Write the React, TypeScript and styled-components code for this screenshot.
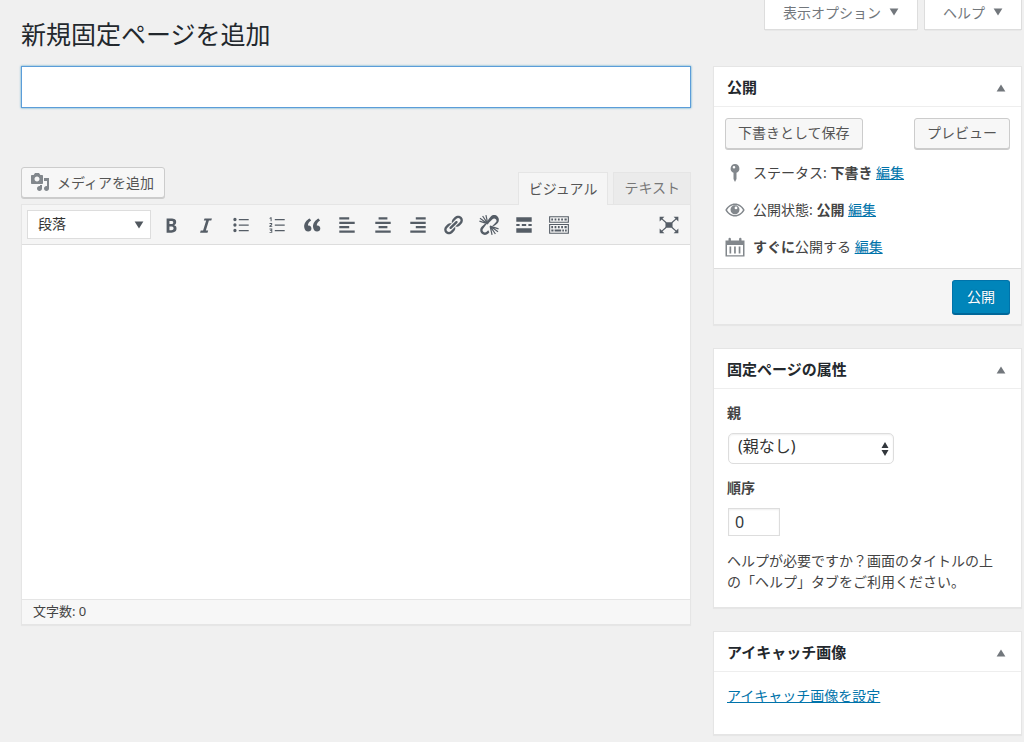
import React from 'react';
import styled, { createGlobalStyle } from 'styled-components';

const Global = createGlobalStyle`
  *, *::before, *::after { box-sizing: border-box; }
  body {
    margin: 0;
    background: #f0f0f0;
    color: #444;
    font: 14px/20px "Noto Sans", "Noto Sans CJK JP", sans-serif;
  }
  button, input, select, textarea { font-family: inherit; color: inherit; margin: 0; }
`;

const Page = styled.div`
  padding: 0 2px 6px 21px;
`;

const Header = styled.header`
  display: flex;
  justify-content: space-between;
  align-items: flex-start;
  height: 66px;
`;

const PageTitle = styled.h1`
  margin: 0;
  padding-top: 17px;
  font-size: 25px;
  line-height: 34px;
  font-weight: 400;
  color: #23282d;
`;

const MetaTabs = styled.nav`
  display: flex;
  gap: 6px;
`;

const MetaTab = styled.button`
  display: flex;
  align-items: center;
  gap: 8px;
  height: 30px;
  padding: 0 18px 5px;
  border: 1px solid #ddd;
  border-top: 0;
  background: #fff;
  box-shadow: 0 1px 1px -1px rgba(0, 0, 0, 0.2);
  color: #72777c;
  font-size: 14px;
`;

const Columns = styled.div`
  display: grid;
  grid-template-columns: minmax(0, 1fr) 309px;
  gap: 22px;
  align-items: start;
`;

const TitleInput = styled.input`
  display: block;
  width: 100%;
  height: 42px;
  padding: 4px 10px;
  border: 1px solid #5b9dd9;
  background: #fff;
  box-shadow: 0 0 2px rgba(30, 140, 190, 0.8);
  font-size: 20px;
  outline: 0;
`;

const EditorBar = styled.div`
  display: flex;
  justify-content: space-between;
  align-items: flex-end;
  margin-top: 59px;
`;

const Button = styled.button<{ $primary?: boolean }>`
  display: inline-flex;
  align-items: center;
  justify-content: center;
  gap: 6px;
  height: ${p => (p.$primary ? 34 : 31)}px;
  padding: 0 ${p => (p.$primary ? 14 : 12)}px 3px;
  border: 1px solid ${p => (p.$primary ? '#0073aa' : '#ccc')};
  border-bottom-color: ${p => (p.$primary ? '#006799' : '#ccc')};
  border-radius: 3px;
  background: ${p => (p.$primary ? '#0085ba' : '#f7f7f7')};
  box-shadow: 0 1px 0 ${p => (p.$primary ? '#006799' : '#ccc')};
  color: ${p => (p.$primary ? '#fff' : '#555')};
  text-shadow: ${p => (p.$primary ? '0 -1px 1px #006799' : 'none')};
  font-size: 14px;
  white-space: nowrap;
`;

const MediaButton = styled(Button)`
  gap: 7px;
  margin-bottom: 6px;
  padding: 0 10px 2px 8px;
  svg { color: #82878c; }
`;

const Tabs = styled.div`
  display: flex;
  gap: 5px;
`;

const Tab = styled.button<{ $active?: boolean }>`
  position: relative;
  height: ${p => (p.$active ? 33 : 32)}px;
  margin-bottom: ${p => (p.$active ? -1 : 0)}px;
  padding: 0 10px 3px;
  border: 1px solid #e5e5e5;
  border-bottom: 0;
  background: ${p => (p.$active ? '#f5f5f5' : '#ebebeb')};
  color: ${p => (p.$active ? '#555' : '#777')};
  font-size: 14px;
`;

const Editor = styled.section`
  border: 1px solid #e5e5e5;
  background: #fff;
  box-shadow: 0 1px 1px rgba(0, 0, 0, 0.04);
`;

const Toolbar = styled.div`
  display: flex;
  align-items: center;
  height: 40px;
  padding: 0 5px;
  border-bottom: 1px solid #ddd;
  background: #f5f5f5;
`;

const FormatBox = styled.div`
  display: flex;
  align-items: center;
  width: 124px;
  height: 29px;
  margin-right: 2px;
  padding-right: 6px;
  border: 1px solid #ddd;
  background: #fff;
  color: #50575e;
`;

const PlainSelect = styled.select`
  flex: 1;
  min-width: 0;
  height: 100%;
  padding: 0 10px 2px;
  border: 0;
  appearance: none;
  background: transparent;
  color: #333;
  font-size: 14px;
`;

const ParentSelect = styled(PlainSelect)`
  padding: 0 9px 5px;
  font-size: 16px;
`;

const ToolGroup = styled.div`
  display: flex;
  flex: 0 1 424px;
`;

const Tool = styled.button`
  display: flex;
  flex: 1;
  align-items: center;
  justify-content: center;
  padding: 0;
  border: 0;
  background: none;
  color: #555d66;
`;

const CornerTool = styled(Tool)`
  flex: 0 0 32px;
  margin-left: auto;
`;

const Canvas = styled.textarea`
  display: block;
  width: 100%;
  height: 354px;
  padding: 10px;
  border: 0;
  outline: 0;
  resize: none;
  background: #fff;
  font-size: 16px;
`;

const StatusBar = styled.footer`
  height: 25px;
  padding: 0 11px;
  border-top: 1px solid #e5e5e5;
  background: #f7f7f7;
  font-size: 13px;
  line-height: 23px;
`;

const Sidebar = styled.aside`
  display: flex;
  flex-direction: column;
  gap: 23px;
`;

const Panel = styled.section`
  border: 1px solid #e5e5e5;
  background: #fff;
  box-shadow: 0 1px 1px rgba(0, 0, 0, 0.04);
`;

const PanelHead = styled.div`
  display: flex;
  align-items: center;
  justify-content: space-between;
  height: 40px;
  padding: 0 15px 0 13px;
  border-bottom: 1px solid #eee;
`;

const PanelTitle = styled.h2`
  margin: 0;
  font-size: 15px;
  line-height: 20px;
  font-weight: 700;
  color: #23282d;
`;

const Toggle = styled.button`
  display: flex;
  padding: 3px 0 0;
  border: 0;
  background: none;
  color: #72777c;
`;

const PanelBody = styled.div`
  padding: 14px 13px 15px;
`;

const PublishBody = styled.div`
  padding: 11px 11px 11px;
`;

const Actions = styled.div`
  display: flex;
  justify-content: space-between;
  margin-bottom: 14px;
`;

const StatusList = styled.ul`
  display: grid;
  gap: 17px;
  margin: 0;
  padding: 0;
  list-style: none;
`;

const StatusRow = styled.li`
  display: flex;
  align-items: center;
  gap: 8px;
  height: 20px;
  color: #444;
  svg { color: #82878c; }
`;

const Link = styled.a`
  color: #0073aa;
  text-decoration: underline;
`;

const PanelFoot = styled.div`
  display: flex;
  justify-content: flex-end;
  padding: 11px 11px 10px;
  border-top: 1px solid #ddd;
  background: #f5f5f5;
`;

const FieldLabel = styled.label`
  display: block;
  margin-bottom: 10px;
  font-weight: 700;
`;

const ParentBox = styled.div`
  display: flex;
  align-items: center;
  width: 166px;
  height: 31px;
  margin: 0 0 14px 1px;
  padding-right: 4px;
  border: 1px solid #ddd;
  border-radius: 5px;
  box-shadow: inset 0 1px 2px rgba(0, 0, 0, 0.07);
  color: #32373c;
`;

const OrderInput = styled.input`
  display: block;
  width: 52px;
  height: 28px;
  margin: 0 0 14px 1px;
  padding: 3px 6px;
  border: 1px solid #ddd;
  box-shadow: inset 0 1px 2px rgba(0, 0, 0, 0.07);
  color: #32373c;
  font-size: 16px;
`;

const Help = styled.p`
  margin: 0;
  padding-right: 8px;
  line-height: 21px;
`;

const FeaturedBody = styled(PanelBody)`
  padding-bottom: 28px;
`;

type IconProps = { d: string; size?: number; strokes?: string };
const Icon = ({ d, size = 22, strokes }: IconProps) => (
  <svg width={size} height={size} viewBox="0 0 20 20" fill="currentColor" fillRule="evenodd" aria-hidden="true">
    <path d={d} />
    {strokes && <path d={strokes} fill="none" stroke="currentColor" strokeWidth="1.1" />}
  </svg>
);

const Triangle = ({ up }: { up?: boolean }) => (
  <svg width="10" height="8" viewBox="0 0 10 8" fill="currentColor" aria-hidden="true">
    <path d={up ? 'M5 0.5L9.4 7.5H0.6z' : 'M0.6 0.5H9.4L5 7.5z'} />
  </svg>
);

const icons = {
  bold: 'M6 4v13h4.54c1.37 0 2.46-.33 3.26-1 .8-.66 1.2-1.58 1.2-2.77 0-.84-.17-1.51-.51-2.01s-.9-.85-1.67-1.03v-.09c.57-.1 1.02-.4 1.36-.9s.51-1.13.51-1.91c0-1.14-.39-1.98-1.17-2.5C12.75 4.26 11.5 4 9.78 4H6zm2.57 5.15V6.26h1.36c.73 0 1.27.11 1.61.32.34.22.51.58.51 1.07 0 .54-.16.92-.47 1.15s-.82.35-1.51.35h-1.45zm0 2.19h1.6c1.44 0 2.16.53 2.16 1.61 0 .6-.17 1.05-.51 1.34s-.86.43-1.57.43H8.57v-3.38z',
  italic: 'M14.78 6h-2.13l-2.8 9h2.12l-.62 2H4.6l.62-2h2.14l2.8-9H8.03l.62-2h6.75z',
  bullets: 'M4.5 3.5a1.5 1.5 0 1 1 0 3 1.5 1.5 0 0 1 0-3zm0 5a1.5 1.5 0 1 1 0 3 1.5 1.5 0 0 1 0-3zm0 5a1.5 1.5 0 1 1 0 3 1.5 1.5 0 0 1 0-3zM8 4.5h9v1.1H8zM8 9.5h9v1.1H8zM8 14.5h9v1.1H8z',
  numbers: 'M8 4.5h9v1.1H8zM8 9.5h9v1.1H8zM8 14.5h9v1.1H8zM4.2 3h.9v3.6h-.9V4.1l-.9.4v-.8zM3.2 8.2h2.4v1.9l-1.4 1h1.5v.8H3.1v-1.2l1.6-1.1V9H3.2zM3.2 13.2h2.5v3.9H3.2v-.8h1.6v-.8H3.6v-.8h1.2V14H3.2z',
  quote: 'M9.49 13.22c0-.74-.2-1.38-.61-1.9-.62-.78-1.83-.88-2.53-.72-.29-1.65 1.11-3.75 2.92-4.65L7.88 4c-2.73 1.3-5.42 4.28-4.96 8.05C3.21 14.43 4.59 16 6.54 16c.85 0 1.56-.25 2.12-.75s.83-1.18.83-2.03zm8.05 0c0-.74-.2-1.38-.61-1.9-.63-.78-1.83-.88-2.53-.72-.29-1.65 1.11-3.75 2.92-4.65L15.93 4c-2.73 1.3-5.41 4.28-4.95 8.05.29 2.38 1.66 3.95 3.61 3.95.85 0 1.56-.25 2.12-.75s.83-1.18.83-2.03z',
  left: 'M12 5V3H3v2h9zm5 4V7H3v2h14zm-5 4v-2H3v2h9zm5 4v-2H3v2h14z',
  center: 'M14 5V3H6v2h8zm3 4V7H3v2h14zm-3 4v-2H6v2h8zm3 4v-2H3v2h14z',
  right: 'M17 5V3H8v2h9zm0 4V7H3v2h14zm0 4v-2H8v2h9zm0 4v-2H3v2h14z',
  link: 'M17.74 2.76c1.68 1.69 1.68 4.41 0 6.1l-1.53 1.52c-1.12 1.12-2.7 1.47-4.14 1.09l2.62-2.61.76-.77.76-.76c.84-.84.84-2.2 0-3.04-.84-.85-2.2-.85-3.04 0l-.77.76-3.38 3.38c-.37-1.44-.02-3.02 1.1-4.14l1.52-1.53c1.69-1.68 4.42-1.68 6.1 0zM8.59 13.43l5.34-5.34c.42-.42.42-1.1 0-1.52-.44-.43-1.13-.39-1.53 0l-5.33 5.34c-.42.42-.42 1.1 0 1.52.44.43 1.13.39 1.52 0zm-.76 2.29l4.14-4.15c.38 1.44.03 3.02-1.09 4.14l-1.52 1.53c-1.69 1.68-4.41 1.68-6.1 0-1.68-1.68-1.68-4.42 0-6.1l1.53-1.52c1.12-1.12 2.7-1.47 4.14-1.1l-4.14 4.15c-.85.84-.85 2.2 0 3.05.84.84 2.2.84 3.04 0z',
  unlink: 'M17.74 2.26c1.68 1.69 1.68 4.41 0 6.1l-1.53 1.52c-.9.9-2.1 1.3-3.5 1.2l2.74-2.62.76-.86c.84-.84.84-2.1 0-2.94-.84-.85-2.2-.85-3.04 0L9.2 8.6c-.6-1.6-.3-3.300 1.1-4.7l1.340-1.640c1.690-1.680 4.420-1.680 6.100 0zM7.830 16.220l1.500-1.500 1 1.900-.970 1.130c-1.690 1.680-4.410 1.680-6.100 0-1.680-1.680-1.680-4.420 0-6.100l1.530-1.520c.9-.9 2-1.300 3.200-1.200l-3.200 4.250c-.850.840-.850 2.200 0 3.050.840.840 2.200.840 3.040 0z',
  unlinkRays: 'M9 9L1.300 6.500M9 9L1.800 3.800M9 9L4.200 1.800M9 9L7.200 1M11 11l7.700 2.500M11 11l7.200 5.200M11 11l4.800 7.200M11 11l1.800 8',
  more: 'M17 7V3H3v4h14zM6 11V9H3v2h3zm6 0V9H8v2h4zm5 0V9h-3v2h3zm0 6v-4H3v4h14z',
  sink: 'M19 2v6H1V2zm-1 5V3H2v4zM3 4h1.6v2H3zM6 4h1.6v2H6zM9 4h1.6v2H9zM12 4h1.6v2H12zM15 4h2v2h-2zM19 9v9H1V9zm-1 8v-7H2v7zM3 11h1.6v2H3zM6 11h1.6v2H6zM9 11h1.6v2H9zM12 11h1.6v2H12zM15 11h2v2h-2zM3 14h2v2H3zM6 14h6v2H6zM13 14h1.5v2H13zM15.5 14H17v2h-1.5z',
  full: 'M6.800 7.500h6.400v5H6.800zM1.500 2.500h4.300L1.500 6.800zM18.500 2.500h-4.300l4.300 4.300zM1.500 17.500h4.300l-4.300-4.300zM18.500 17.500h-4.300l4.300-4.300z',
  fullArms: 'M3 4l4.500 4M17 4l-4.500 4M3 16l4.500-4M17 16l-4.500-4',
  media: 'M13 11V4c0-.55-.45-1-1-1h-1.670L9 1H5L3.670 3H2c-.55 0-1 .45-1 1v7c0 .55.45 1 1 1h10c.55 0 1-.45 1-1zM7 4.500c1.380 0 2.500 1.120 2.500 2.500S8.380 9.500 7 9.500 4.500 8.380 4.500 7 5.620 4.500 7 4.500zM14 6h5v10.500c0 1.380-1.120 2.500-2.500 2.500S14 17.880 14 16.500s1.120-2.500 2.500-2.500c.17 0 .340.020.500.050V9h-3V6zm-4 8.050V13h2v3.500c0 1.380-1.120 2.500-2.500 2.500S7 17.880 7 16.500 8.120 14 9.500 14c.17 0 .340.020.500.050z',
  pin: 'M10 1a4.500 4.500 0 0 1 1.500 8.700V16L10 19l-1.500-3V9.700A4.500 4.500 0 0 1 10 1zM9 3a1.300 1.300 0 1 0 0 2.600A1.300 1.300 0 0 0 9 3z',
  eye: 'M10 3.500c4 0 7.500 2.500 9.700 6.500-2.200 4-5.700 6.500-9.700 6.500S2.500 14 .3 10C2.500 6 6 3.500 10 3.500zm0 1.500C6.800 5 3.900 6.800 2 10c1.900 3.200 4.800 5 8 5s6.100-1.800 8-5c-1.900-3.200-4.800-5-8-5zM10 5.200a4.500 4.500 0 1 1 0 9 4.500 4.500 0 0 1 0-9zM11 6.500a1.400 1.400 0 1 0 0 2.800 1.400 1.400 0 0 0 0-2.800z',
  calendar: 'M.5 3.500H3.500V2a1.200 1.200 0 0 1 2.400 0v1.500h8.200V2a1.200 1.200 0 0 1 2.400 0v1.500h3V19.500H.5zM2 8v10.200h16V8zM4.500 9.500H6.200v7H4.500zM9.100 9.500h1.700v7H9.100zM13.700 9.500h1.700v7h-1.700z',
};

const tools: [string, string, string?][] = [
  ['太字', icons.bold], ['イタリック', icons.italic], ['番号なしリスト', icons.bullets], ['番号付きリスト', icons.numbers],
  ['引用', icons.quote], ['左寄せ', icons.left], ['中央揃え', icons.center], ['右寄せ', icons.right],
  ['リンクの挿入', icons.link], ['リンクの削除', icons.unlink, icons.unlinkRays], ['続きを読む', icons.more], ['ツールバー切り替え', icons.sink],
];

const PanelHeader = ({ title }: { title: string }) => (
  <PanelHead>
    <PanelTitle>{title}</PanelTitle>
    <Toggle type="button" aria-label={title}><Triangle up /></Toggle>
  </PanelHead>
);

export default function App() {
  return (
    <>
      <Global />
      <Page>
        <Header>
          <PageTitle>新規固定ページを追加</PageTitle>
          <MetaTabs>
            <MetaTab type="button">表示オプション <Triangle /></MetaTab>
            <MetaTab type="button">ヘルプ <Triangle /></MetaTab>
          </MetaTabs>
        </Header>
        <Columns>
          <main>
            <TitleInput type="text" aria-label="タイトル" />
            <EditorBar>
              <MediaButton type="button"><Icon d={icons.media} size={20} />メディアを追加</MediaButton>
              <Tabs>
                <Tab type="button" $active>ビジュアル</Tab>
                <Tab type="button">テキスト</Tab>
              </Tabs>
            </EditorBar>
            <Editor>
              <Toolbar>
                <FormatBox>
                  <PlainSelect aria-label="書式"><option>段落</option></PlainSelect>
                  <Triangle />
                </FormatBox>
                <ToolGroup>
                  {tools.map(([label, d, strokes]) => (
                    <Tool key={label} type="button" aria-label={label}><Icon d={d} strokes={strokes} /></Tool>
                  ))}
                </ToolGroup>
                <CornerTool type="button" aria-label="集中執筆モード"><Icon d={icons.full} strokes={icons.fullArms} /></CornerTool>
              </Toolbar>
              <Canvas aria-label="本文" />
              <StatusBar>文字数: 0</StatusBar>
            </Editor>
          </main>
          <Sidebar>
            <Panel>
              <PanelHeader title="公開" />
              <PublishBody>
                <Actions>
                  <Button type="button">下書きとして保存</Button>
                  <Button type="button">プレビュー</Button>
                </Actions>
                <StatusList>
                  <StatusRow><Icon d={icons.pin} size={20} /><span>ステータス: <b>下書き</b> <Link href="#status">編集</Link></span></StatusRow>
                  <StatusRow><Icon d={icons.eye} size={20} /><span>公開状態: <b>公開</b> <Link href="#visibility">編集</Link></span></StatusRow>
                  <StatusRow><Icon d={icons.calendar} size={20} /><span><b>すぐに</b>公開する <Link href="#date">編集</Link></span></StatusRow>
                </StatusList>
              </PublishBody>
              <PanelFoot><Button type="button" $primary>公開</Button></PanelFoot>
            </Panel>
            <Panel>
              <PanelHeader title="固定ページの属性" />
              <PanelBody>
                <FieldLabel htmlFor="parent">親</FieldLabel>
                <ParentBox>
                  <ParentSelect id="parent"><option>(親なし)</option></ParentSelect>
                  <svg width="8" height="14" viewBox="0 0 8 14" fill="currentColor" aria-hidden="true">
                    <path d="M4 0l3.5 6h-7zM0.5 8h7L4 14z" />
                  </svg>
                </ParentBox>
                <FieldLabel htmlFor="order">順序</FieldLabel>
                <OrderInput id="order" type="text" defaultValue="0" />
                <Help>ヘルプが必要ですか？画面のタイトルの上の「ヘルプ」タブをご利用ください。</Help>
              </PanelBody>
            </Panel>
            <Panel>
              <PanelHeader title="アイキャッチ画像" />
              <FeaturedBody><Link href="#featured">アイキャッチ画像を設定</Link></FeaturedBody>
            </Panel>
          </Sidebar>
        </Columns>
      </Page>
    </>
  );
}
